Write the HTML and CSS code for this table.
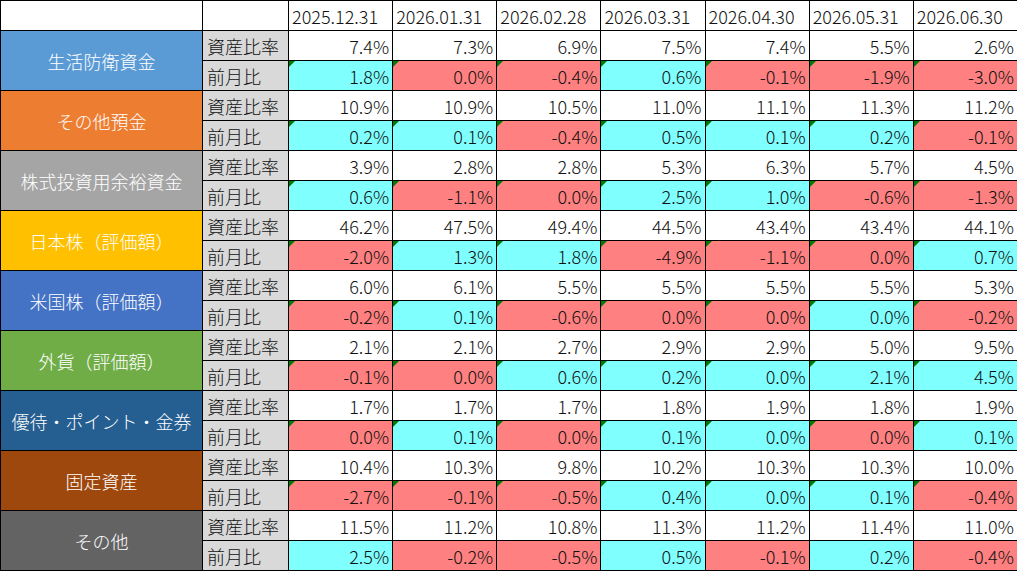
FILE: index.html
```html
<!DOCTYPE html>
<html lang="ja">
<head>
<meta charset="utf-8">
<title>資産比率</title>
<link rel="stylesheet" href="styles.css">
</head>
<body>
<table class="sheet">
  <colgroup>
    <col class="c-group"><col class="c-label">
    <col class="c-date"><col class="c-date"><col class="c-date"><col class="c-date"><col class="c-date"><col class="c-date"><col class="c-date">
  </colgroup>
  <thead>
    <tr>
      <th></th><th></th>
      <th class="date">2025.12.31</th><th class="date">2026.01.31</th><th class="date">2026.02.28</th><th class="date">2026.03.31</th><th class="date">2026.04.30</th><th class="date">2026.05.31</th><th class="date">2026.06.30</th>
    </tr>
  </thead>
  <tbody>
    <tr><td class="grp g1" rowspan="2">生活防衛資金</td><td class="lbl">資産比率</td>
      <td class="v">7.4%</td><td class="v">7.3%</td><td class="v">6.9%</td><td class="v">7.5%</td><td class="v">7.4%</td><td class="v">5.5%</td><td class="v">2.6%</td></tr>
    <tr><td class="lbl">前月比</td>
      <td class="v up tri">1.8%</td><td class="v dn tri">0.0%</td><td class="v dn tri">-0.4%</td><td class="v up tri">0.6%</td><td class="v dn tri">-0.1%</td><td class="v dn tri">-1.9%</td><td class="v dn tri">-3.0%</td></tr>

    <tr><td class="grp g2" rowspan="2">その他預金</td><td class="lbl">資産比率</td>
      <td class="v">10.9%</td><td class="v">10.9%</td><td class="v">10.5%</td><td class="v">11.0%</td><td class="v">11.1%</td><td class="v">11.3%</td><td class="v">11.2%</td></tr>
    <tr><td class="lbl">前月比</td>
      <td class="v up tri">0.2%</td><td class="v up tri">0.1%</td><td class="v dn tri">-0.4%</td><td class="v up tri">0.5%</td><td class="v up tri">0.1%</td><td class="v up tri">0.2%</td><td class="v dn tri">-0.1%</td></tr>

    <tr><td class="grp g3" rowspan="2">株式投資用余裕資金</td><td class="lbl">資産比率</td>
      <td class="v">3.9%</td><td class="v">2.8%</td><td class="v">2.8%</td><td class="v">5.3%</td><td class="v">6.3%</td><td class="v">5.7%</td><td class="v">4.5%</td></tr>
    <tr><td class="lbl">前月比</td>
      <td class="v up tri">0.6%</td><td class="v dn tri">-1.1%</td><td class="v dn tri">0.0%</td><td class="v up tri">2.5%</td><td class="v up tri">1.0%</td><td class="v dn tri">-0.6%</td><td class="v dn tri">-1.3%</td></tr>

    <tr><td class="grp g4" rowspan="2">日本株（評価額）</td><td class="lbl">資産比率</td>
      <td class="v">46.2%</td><td class="v">47.5%</td><td class="v">49.4%</td><td class="v">44.5%</td><td class="v">43.4%</td><td class="v">43.4%</td><td class="v">44.1%</td></tr>
    <tr><td class="lbl">前月比</td>
      <td class="v dn tri">-2.0%</td><td class="v up tri">1.3%</td><td class="v up tri">1.8%</td><td class="v dn tri">-4.9%</td><td class="v dn tri">-1.1%</td><td class="v dn tri">0.0%</td><td class="v up tri">0.7%</td></tr>

    <tr><td class="grp g5" rowspan="2">米国株（評価額）</td><td class="lbl">資産比率</td>
      <td class="v">6.0%</td><td class="v">6.1%</td><td class="v">5.5%</td><td class="v">5.5%</td><td class="v">5.5%</td><td class="v">5.5%</td><td class="v">5.3%</td></tr>
    <tr><td class="lbl">前月比</td>
      <td class="v dn tri">-0.2%</td><td class="v up tri">0.1%</td><td class="v dn tri">-0.6%</td><td class="v dn tri">0.0%</td><td class="v dn tri">0.0%</td><td class="v up tri">0.0%</td><td class="v dn tri">-0.2%</td></tr>

    <tr><td class="grp g6" rowspan="2">外貨（評価額）</td><td class="lbl">資産比率</td>
      <td class="v">2.1%</td><td class="v">2.1%</td><td class="v">2.7%</td><td class="v">2.9%</td><td class="v">2.9%</td><td class="v">5.0%</td><td class="v">9.5%</td></tr>
    <tr><td class="lbl">前月比</td>
      <td class="v dn tri">-0.1%</td><td class="v dn tri">0.0%</td><td class="v up tri">0.6%</td><td class="v up tri">0.2%</td><td class="v up tri">0.0%</td><td class="v up tri">2.1%</td><td class="v up tri">4.5%</td></tr>

    <tr><td class="grp g7" rowspan="2">優待・ポイント・金券</td><td class="lbl">資産比率</td>
      <td class="v">1.7%</td><td class="v">1.7%</td><td class="v">1.7%</td><td class="v">1.8%</td><td class="v">1.9%</td><td class="v">1.8%</td><td class="v">1.9%</td></tr>
    <tr><td class="lbl">前月比</td>
      <td class="v dn tri">0.0%</td><td class="v up tri">0.1%</td><td class="v dn tri">0.0%</td><td class="v up tri">0.1%</td><td class="v up tri">0.0%</td><td class="v dn tri">0.0%</td><td class="v up tri">0.1%</td></tr>

    <tr><td class="grp g8" rowspan="2">固定資産</td><td class="lbl">資産比率</td>
      <td class="v">10.4%</td><td class="v">10.3%</td><td class="v">9.8%</td><td class="v">10.2%</td><td class="v">10.3%</td><td class="v">10.3%</td><td class="v">10.0%</td></tr>
    <tr><td class="lbl">前月比</td>
      <td class="v dn tri">-2.7%</td><td class="v dn tri">-0.1%</td><td class="v dn tri">-0.5%</td><td class="v up tri">0.4%</td><td class="v up tri">0.0%</td><td class="v up tri">0.1%</td><td class="v dn tri">-0.4%</td></tr>

    <tr><td class="grp g9" rowspan="2">その他</td><td class="lbl">資産比率</td>
      <td class="v">11.5%</td><td class="v">11.2%</td><td class="v">10.8%</td><td class="v">11.3%</td><td class="v">11.2%</td><td class="v">11.4%</td><td class="v">11.0%</td></tr>
    <tr><td class="lbl">前月比</td>
      <td class="v up">2.5%</td><td class="v dn">-0.2%</td><td class="v dn">-0.5%</td><td class="v up">0.5%</td><td class="v dn">-0.1%</td><td class="v up">0.2%</td><td class="v dn">-0.4%</td></tr>
  </tbody>
</table>
</body>
</html>
```

FILE: styles.css
```css
html, body {
  margin: 0;
  padding: 0;
  background: #ffffff;
}

.sheet {
  border-collapse: collapse;
  table-layout: fixed;
  width: 1017px;
  font-family: "Noto Sans CJK JP", "Noto Sans", sans-serif;
  font-size: 18px;
  font-weight: 300;
  color: #111111;
}

.c-group { width: 202px; }
.c-label { width: 86px; }
.c-date { width: 104.14px; }

.sheet tr { height: 30px; }

.sheet th,
.sheet td {
  border: 1px solid #000000;
  padding: 0;
  line-height: 28px;
  height: 29px;
  white-space: nowrap;
  overflow: hidden;
  font-weight: 300;
  vertical-align: middle;
}

.sheet th.date {
  text-align: left;
  padding-left: 3px;
}

.grp {
  color: #ffffff;
  text-align: center;
}
.g1 { background: #5b9bd5; }
.g2 { background: #ed7d31; }
.g3 { background: #a5a5a5; }
.g4 { background: #ffc000; }
.g5 { background: #4472c4; }
.g6 { background: #70ad47; }
.g7 { background: #255e91; }
.g8 { background: #9e480e; }
.g9 { background: #636363; }

.lbl {
  background: #d9d9d9;
  text-align: left;
  padding-left: 4px !important;
}

.v {
  text-align: right;
  padding-right: 3px !important;
  background: #ffffff;
  position: relative;
}
.up { background: #80ffff; }
.dn { background: #ff8080; }

.tri::before {
  content: "";
  position: absolute;
  left: 0;
  top: 0;
  width: 0;
  height: 0;
  border-top: 6px solid #007a00;
  border-right: 6px solid transparent;
}
```
